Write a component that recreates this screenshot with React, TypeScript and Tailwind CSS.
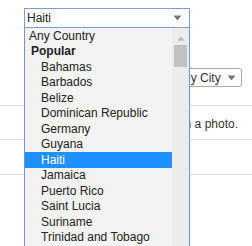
import React from "react";

const font = { fontFamily: '"Liberation Sans", Arial, sans-serif' };

type Row = { label: string; kind: "plain" | "group" | "opt"; selected?: boolean };

const rows: Row[] = [
  { label: "Any Country", kind: "plain" },
  { label: "Popular", kind: "group" },
  { label: "Bahamas", kind: "opt" },
  { label: "Barbados", kind: "opt" },
  { label: "Belize", kind: "opt" },
  { label: "Dominican Republic", kind: "opt" },
  { label: "Germany", kind: "opt" },
  { label: "Guyana", kind: "opt" },
  { label: "Haiti", kind: "opt", selected: true },
  { label: "Jamaica", kind: "opt" },
  { label: "Puerto Rico", kind: "opt" },
  { label: "Saint Lucia", kind: "opt" },
  { label: "Suriname", kind: "opt" },
  { label: "Trinidad and Tobago", kind: "opt" },
];

function Arrow() {
  return (
    <svg width="9" height="6" viewBox="0 0 9 6">
      <path d="M0.5 0.5 H8.5 L4.5 5.5 Z" fill="#777" />
    </svg>
  );
}

export default function App() {
  return (
    <div className="relative w-[252px] h-[246px] overflow-hidden bg-white text-[12px] text-[#222]" style={font}>
      {/* background page */}
      <div className="h-[105px] pt-[68px] flex justify-end pr-[10px]">
        <div className="w-[71px] h-[19px] border border-[#a9a9a9] rounded-[3px] bg-white flex items-center justify-between pl-[4px] pr-[5px]">
          <span className="text-[12px] leading-none text-[#333] whitespace-nowrap">Any City</span>
          <Arrow />
        </div>
      </div>
      <div className="h-[34px] border-t border-[#dedede] flex items-center justify-end pr-[14px] pt-[2px]">
        <span className="text-[12px] text-[#333] whitespace-nowrap">Search in a photo.</span>
      </div>
      <div className="h-[35px] border-t border-[#dedede]" />
      <div className="h-[72px] border-t border-[#dedede]" />

      {/* open select overlay */}
      <div className="absolute left-[24px] top-[8px] w-[166px]">
        <div className="h-[20px] border border-[#7f9dcf] bg-white flex items-center justify-between pl-[2px] pr-[7px]">
          <span className="leading-none">Haiti</span>
          <Arrow />
        </div>
        <div className="relative h-[240px] border-x border-[#7b8fd1] bg-[#f3f3f3]">
          <div className="w-[147px]">
            {rows.map((r) => (
              <div
                key={r.label}
                className={
                  "h-[15.5px] flex items-center leading-none whitespace-nowrap " +
                  (r.selected ? "bg-[#1e90ff] text-white " : "") +
                  (r.kind === "plain" ? "pl-[4px]" : r.kind === "group" ? "pl-[6px] font-bold" : "pl-[16px]")
                }
              >
                {r.label}
              </div>
            ))}
          </div>
          <div className="absolute right-0 top-0 w-[17px] h-full bg-[#ececec] flex flex-col items-center">
            <svg width="8" height="5" viewBox="0 0 8 5" className="mt-[8px]">
              <path d="M0.5 4.5 H7.5 L4 0.5 Z" fill="#b4b4b4" />
            </svg>
            <div className="mt-[4px] w-[13px] h-[22px] bg-[#c1c1c1]" />
          </div>
        </div>
      </div>
    </div>
  );
}
